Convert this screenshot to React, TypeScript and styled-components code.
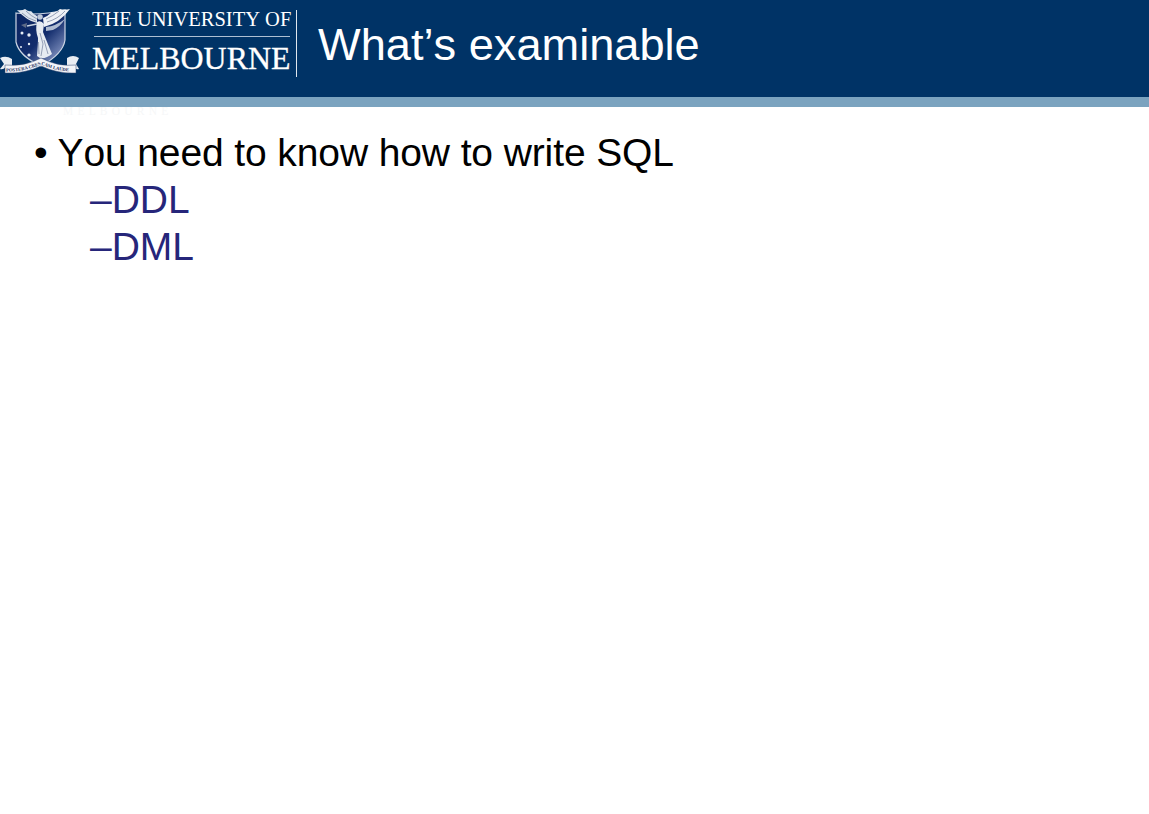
import styled, { createGlobalStyle } from "styled-components";

const GlobalStyle = createGlobalStyle`
  html, body {
    margin: 0;
    padding: 0;
    background: #ffffff;
  }
`;

const Slide = styled.div`
  width: 1149px;
  height: 814px;
  overflow: hidden;
  font-family: "Liberation Sans", Arial, sans-serif;
  font-kerning: none;
`;

const Header = styled.header`
  height: 97px;
  background: #003366;
  display: flex;
  align-items: flex-start;
`;

const Crest = styled.svg`
  width: 80px;
  height: 78px;
  flex: none;
  display: block;
`;

const Wordmark = styled.div`
  width: 199px;
  margin-left: 12px;
  padding-top: 9px;
  font-family: "Liberation Serif", "Times New Roman", serif;
  color: #ffffff;
`;

const WordTop = styled.div`
  font-size: 20.5px;
  line-height: 21px;
  white-space: nowrap;
`;

const WordRule = styled.div`
  height: 1px;
  width: 196px;
  margin: 6px 0 3px 2px;
  background: #aebfd2;
`;

const WordBottom = styled.div`
  font-size: 31.9px;
  line-height: 37px;
  white-space: nowrap;
  -webkit-text-stroke: 0.3px #ffffff;
`;

const Divider = styled.div`
  width: 1px;
  height: 67px;
  margin: 10px 0 0 5px;
  background: #dfe6ee;
`;

const Title = styled.h1`
  margin: 15px 0 0 21px;
  font-size: 45.2px;
  line-height: 60px;
  font-weight: 400;
  color: #ffffff;
`;

const Band = styled.div`
  height: 10px;
  background: #7ba3bf;
`;

// faint leftover of the master slide wordmark, just under the band
const GhostStrip = styled.div`
  height: 8px;
  padding-left: 63px;
  font-family: "Liberation Serif", "Times New Roman", serif;
  font-size: 11.5px;
  letter-spacing: 4.2px;
  line-height: 8px;
  color: #f6f7f8;
`;

const Content = styled.main`
  padding: 14px 0 0 34px;
`;

const Bullet = styled.div`
  display: flex;
  font-size: 39px;
  line-height: 47px;
  letter-spacing: -0.11px;
  color: #000000;
`;

const BulletMark = styled.span`
  width: 23.5px;
  flex: none;
`;

const SubList = styled.div`
  padding-left: 56px;
`;

const SubItem = styled.div`
  font-size: 39px;
  line-height: 47px;
  color: #26267a;
`;

const CrestLogo = () => (
  <Crest viewBox="0 0 80 78">
    <defs>
      <linearGradient id="shieldFill" x1="0.1" y1="0" x2="0.9" y2="0.9">
        <stop offset="0" stopColor="#0a2460" />
        <stop offset="0.55" stopColor="#122c6c" />
        <stop offset="1" stopColor="#8c9cc8" />
      </linearGradient>
      <path id="mottoCurve" d="M6 71.5 Q24 72 41 64.5 Q58 72 77 71.5" />
    </defs>
    {/* shield */}
    <path
      d="M16 13 Q40 16 65 10 L65 40 Q63 54 41 66 Q19 56 16 42 Z"
      fill="url(#shieldFill)"
      stroke="#cdd6e4"
      strokeWidth="1.2"
    />
    {/* stars */}
    <g fill="#e8edf5">
      <circle cx="22" cy="33" r="1.5" />
      <circle cx="29" cy="35" r="1.7" />
      <circle cx="29" cy="44" r="1.2" />
      <circle cx="21" cy="47" r="1" />
      <circle cx="29" cy="55" r="1.6" />
    </g>
    {/* wings */}
    <path
      d="M37 23 Q27 21 17 10 Q22 11 25 9 Q29 12 31 11 Q33 14 37 16 Z"
      fill="#dfe5ee"
    />
    <path
      d="M44 27 Q60 23 70 9 Q64 10 60 9 Q55 13 52 12 Q48 16 43 18 Z"
      fill="#eef1f6"
    />
    <path
      d="M22 13 Q28 19 36 21 M26 11 Q31 16 37 19 M47 22 Q58 19 65 11 M46 19 Q53 16 59 11"
      stroke="#6f7d9a"
      strokeWidth="0.7"
      fill="none"
    />
    <path d="M46 27 Q56 26 65 19 Q60 27 53 30 L46 31 Z" fill="#aebbd1" />
    {/* arm and held wreath */}
    <path d="M37 24 L27 26" stroke="#c9d2e0" strokeWidth="1.4" />
    <path d="M21 25 L27 23 L26 28 Z" fill="#5e6b88" />
    {/* figure */}
    <circle cx="40" cy="17" r="2.8" fill="#c0cadb" />
    <path
      d="M37 22 Q41 20 44 24 L43 32 Q47 42 52 54 Q46 59 40 58 L37 56 Q38 44 38 38 Q35 30 37 22 Z"
      fill="#e6ebf2"
    />
    <path
      d="M40 33 L43 44 L41 56 M44 40 L48 54 M38.5 42 L39 54"
      stroke="#7f8ca6"
      strokeWidth="0.8"
      fill="none"
    />
    {/* scroll */}
    <path d="M0 58 Q6 55 12 59 L12 68 L6 67 Q3 70 0 69 L4 64 Z" fill="#e9edf3" />
    <path d="M79 58 Q73 54 67 58 L67 68 L73 67 Q76 70 79 69 L76 64 Z" fill="#e9edf3" />
    <path
      d="M5 65 Q24 67 41 58 Q58 67 76 65 L76 73 Q58 74 41 66 Q24 74 5 73 Z"
      fill="#f2f4f8"
      stroke="#30456f"
      strokeWidth="0.5"
    />
    <text
      fontFamily="'Liberation Serif', serif"
      fontSize="4.7"
      fill="#1b2f5e"
      fontWeight="700"
    >
      <textPath href="#mottoCurve">POSTERA CRESCAM LAUDE</textPath>
    </text>
  </Crest>
);

export default function App() {
  return (
    <Slide>
      <GlobalStyle />
      <Header>
        <CrestLogo />
        <Wordmark>
          <WordTop>THE UNIVERSITY OF</WordTop>
          <WordRule />
          <WordBottom>MELBOURNE</WordBottom>
        </Wordmark>
        <Divider />
        <Title>What’s examinable</Title>
      </Header>
      <Band />
      <GhostStrip>MELBOURNE</GhostStrip>
      <Content>
        <Bullet>
          <BulletMark>•</BulletMark>
          <span>You need to know how to write SQL</span>
        </Bullet>
        <SubList>
          <SubItem>–DDL</SubItem>
          <SubItem>–DML</SubItem>
        </SubList>
      </Content>
    </Slide>
  );
}
